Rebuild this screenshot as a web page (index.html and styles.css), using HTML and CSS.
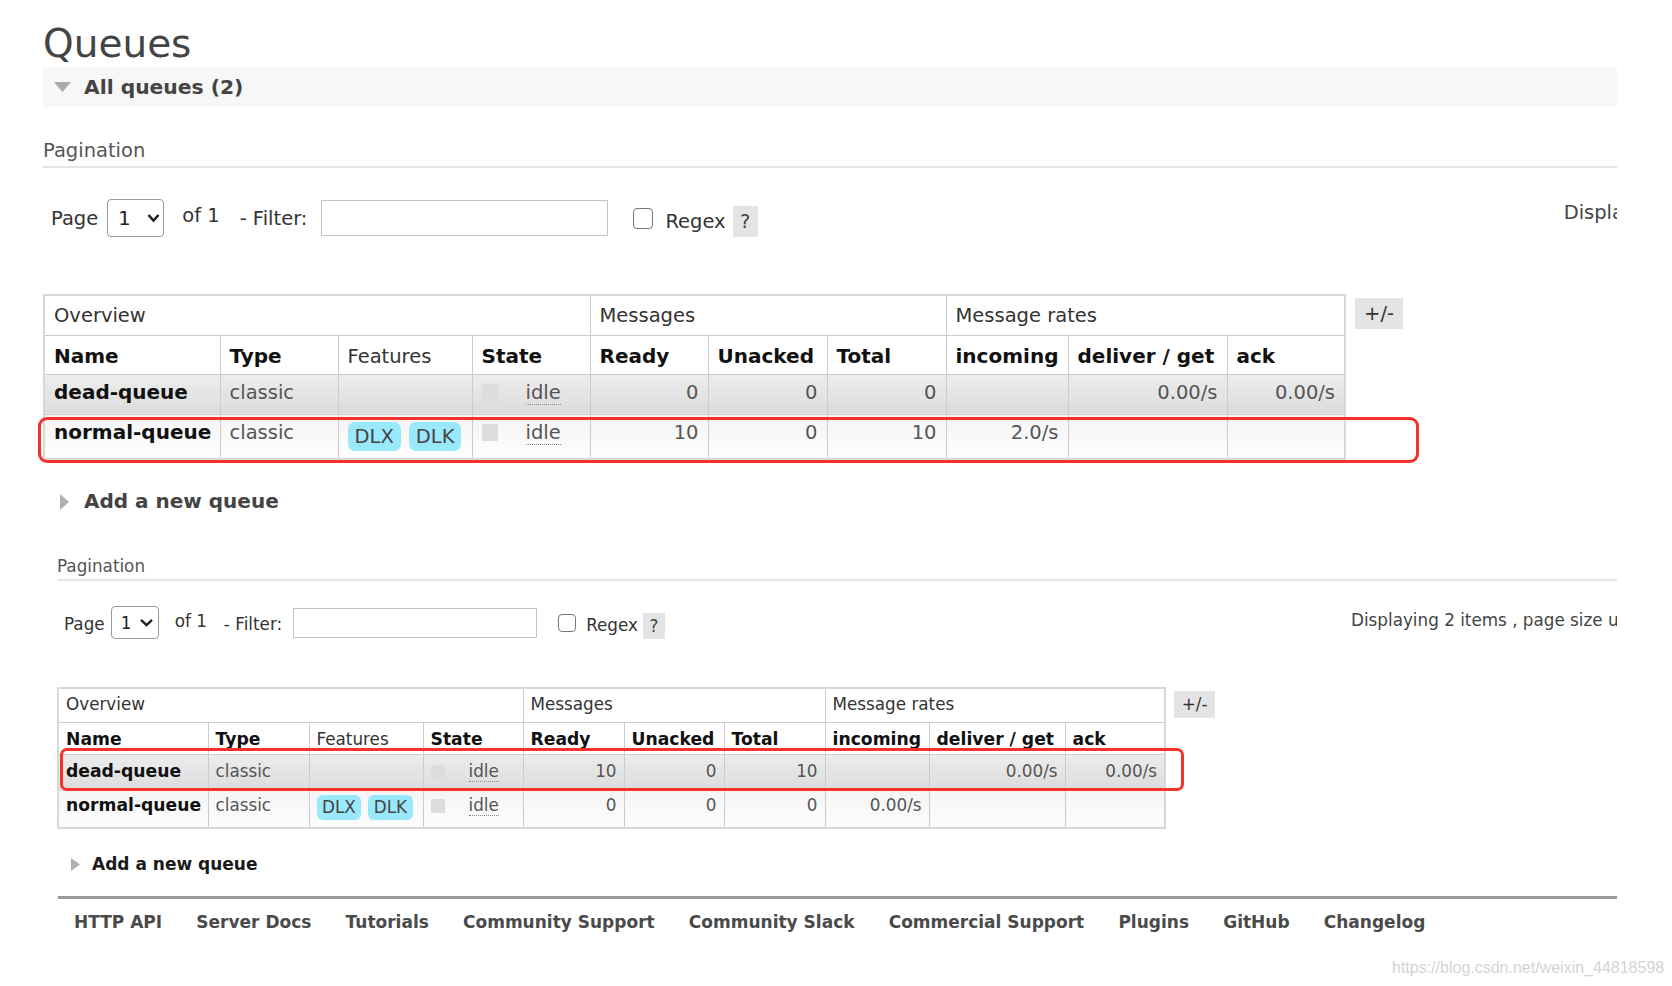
FILE: index.html
```html
<!DOCTYPE html>
<html>
<head>
<meta charset="utf-8">
<title>Queues</title>
<link rel="stylesheet" href="styles.css">
</head>
<body>
<div class="page">
  <section class="s1">
    <h1 class="title">Queues</h1>
    <div class="bar"><svg class="tri-down" viewBox="0 0 17 10"><polygon points="0,0 17,0 8.5,10" fill="#aaa"/></svg><span>All queues (2)</span></div>
    <div class="pag-head">Pagination</div>
    <div class="pag-row">
      <span class="lbl">Page</span>
      <span class="sel"><span>1</span><svg class="chev" viewBox="0 0 13 10"><polyline points="1.5,2 6.5,7.5 11.5,2" fill="none" stroke="#222" stroke-width="2.6"/></svg></span>
      <span class="of">of 1</span>
      <span class="filt">- Filter:</span>
      <span class="inp"></span>
      <span class="cb"></span>
      <span class="regex">Regex</span>
      <span class="help">?</span>
      <span class="disp">Displaying 2 items , page size up to: 100</span>
    </div>
    <div class="tablewrap">
      <table class="list t1">
        <colgroup>
          <col class="w1"><col class="w2"><col class="w3"><col class="w4"><col class="w5"><col class="w6"><col class="w7"><col class="w8"><col class="w9"><col class="w10">
        </colgroup>
        <tr class="rh1"><th colspan="4">Overview</th><th colspan="3">Messages</th><th colspan="3">Message rates</th></tr>
        <tr class="rh2"><th class="b">Name</th><th class="b">Type</th><th>Features</th><th class="b">State</th><th class="b">Ready</th><th class="b">Unacked</th><th class="b">Total</th><th class="b">incoming</th><th class="b">deliver / get</th><th class="b">ack</th></tr>
        <tr class="alt1 rb1"><td class="nm">dead-queue</td><td>classic</td><td></td><td><span class="sq"></span><span class="idle">idle</span></td><td class="n">0</td><td class="n">0</td><td class="n">0</td><td class="n"></td><td class="n">0.00/s</td><td class="n">0.00/s</td></tr>
        <tr class="alt2 rb2"><td class="nm">normal-queue</td><td>classic</td><td><span class="badge">DLX</span><span class="badge">DLK</span></td><td><span class="sq"></span><span class="idle">idle</span></td><td class="n">10</td><td class="n">0</td><td class="n">10</td><td class="n">2.0/s</td><td class="n"></td><td class="n"></td></tr>
      </table>
      <span class="pm">+/-</span>
      <div class="mark mark1"></div>
    </div>
    <div class="add"><svg class="tri-right" viewBox="0 0 9 16"><polygon points="0,0 9,8 0,16" fill="#b0b0b0"/></svg><span>Add a new queue</span></div>
  </section>

  <section class="s2">
    <div class="pag-head">Pagination</div>
    <div class="pag-row">
      <span class="lbl">Page</span>
      <span class="sel"><span>1</span><svg class="chev" viewBox="0 0 15 9"><polyline points="2,1.8 7.5,7 13,1.8" fill="none" stroke="#222" stroke-width="2.4"/></svg></span>
      <span class="of">of 1</span>
      <span class="filt">- Filter:</span>
      <span class="inp"></span>
      <span class="cb"></span>
      <span class="regex">Regex</span>
      <span class="help">?</span>
      <span class="disp">Displaying 2 items , page size up to: 100</span>
    </div>
    <div class="tablewrap">
      <table class="list t2">
        <colgroup>
          <col class="w1"><col class="w2"><col class="w3"><col class="w4"><col class="w5"><col class="w6"><col class="w7"><col class="w8"><col class="w9"><col class="w10">
        </colgroup>
        <tr class="rh1"><th colspan="4">Overview</th><th colspan="3">Messages</th><th colspan="3">Message rates</th></tr>
        <tr class="rh2"><th class="b">Name</th><th class="b">Type</th><th>Features</th><th class="b">State</th><th class="b">Ready</th><th class="b">Unacked</th><th class="b">Total</th><th class="b">incoming</th><th class="b">deliver / get</th><th class="b">ack</th></tr>
        <tr class="alt1 rb1"><td class="nm">dead-queue</td><td>classic</td><td></td><td><span class="sq"></span><span class="idle">idle</span></td><td class="n">10</td><td class="n">0</td><td class="n">10</td><td class="n"></td><td class="n">0.00/s</td><td class="n">0.00/s</td></tr>
        <tr class="alt2 rb2"><td class="nm">normal-queue</td><td>classic</td><td><span class="badge">DLX</span><span class="badge">DLK</span></td><td><span class="sq"></span><span class="idle">idle</span></td><td class="n">0</td><td class="n">0</td><td class="n">0</td><td class="n">0.00/s</td><td class="n"></td><td class="n"></td></tr>
      </table>
      <span class="pm">+/-</span>
      <div class="mark mark2"></div>
    </div>
    <div class="add"><svg class="tri-right" viewBox="0 0 9 13"><polygon points="0,0 9,6.5 0,13" fill="#b0b0b0"/></svg><span>Add a new queue</span></div>
    <div class="footer">
      <span class="fl">HTTP API</span>
      <span class="fl">Server Docs</span>
      <span class="fl">Tutorials</span>
      <span class="fl">Community Support</span>
      <span class="fl">Community Slack</span>
      <span class="fl">Commercial Support</span>
      <span class="fl">Plugins</span>
      <span class="fl">GitHub</span>
      <span class="fl">Changelog</span>
    </div>
  </section>
</div>
<div class="wm">https://blog.csdn.net/weixin_44818598</div>
</body>
</html>
```

FILE: styles.css
```css
* { box-sizing: border-box; }

body {
  margin: 0;
  width: 1672px;
  height: 986px;
  overflow: hidden;
  position: relative;
  background: #fff;
  font-family: "DejaVu Sans", Verdana, sans-serif;
  color: #444;
}

.page {
  margin-left: 43px;
  width: 1574px;
}

/* ---------- section 1 ---------- */
.s1 { font-size: 19.5px; }

.title {
  margin: 21px 0 0;
  font-size: 39px;
  line-height: 46px;
  font-weight: normal;
  color: #444;
}

.bar {
  height: 40px;
  background: #f7f7f7;
  display: flex;
  align-items: center;
  padding-left: 11px;
  font-size: 20.3px;
  font-weight: bold;
  color: #444;
}
.tri-down { width: 17px; height: 10px; margin-right: 13px; }

.pag-head {
  color: #555;
  border-bottom: 2px solid #e6e6e6;
}
.s1 .pag-head { margin-top: 32px; line-height: 23px; padding-bottom: 4px; }

.pag-row {
  display: flex;
  align-items: center;
  overflow: hidden;
  white-space: nowrap;
  color: #333;
}
.s1 .pag-row { margin-top: 31px; height: 38px; line-height: 23px; }

.sel {
  display: flex;
  align-items: center;
  justify-content: space-between;
  background: #fff;
  border: 1px solid #999;
  border-radius: 4px;
  color: #222;
}
.inp { background: #fff; border: 1px solid #c4c4c4; }
.cb { background: #fff; border: 1px solid #777; border-radius: 4px; }
.help { background: #e4e4e4; text-align: center; color: #444; }
.disp { flex: 1 1 0; min-width: 0; overflow: hidden; align-self: flex-start; color: #444; }

.s1 .lbl { margin-left: 8px; }
.s1 .sel { margin-left: 9px; width: 57px; height: 38px; padding: 0 3px 0 10px; }
.s1 .chev { width: 13px; height: 10px; }
.s1 .of { margin-left: 18px; margin-top: -5px; }
.s1 .filt { margin-left: 20px; }
.s1 .inp { margin-left: 14px; width: 287px; height: 36px; }
.s1 .cb { margin-left: 25px; width: 20px; height: 21px; }
.s1 .regex { margin-left: 12px; margin-top: 6px; }
.s1 .help { margin-left: 7px; margin-top: 7px; width: 25px; height: 31px; line-height: 31px; }
.s1 .disp { margin-left: 806px; margin-top: 2px; }

.tablewrap {
  position: relative;
  display: flex;
  align-items: flex-start;
}
.s1 .tablewrap { margin-top: 57px; }

/* ---------- tables ---------- */
.list {
  border-collapse: collapse;
  table-layout: fixed;
  border: 2px solid #d8d8d8;
}
.list th, .list td {
  border: 1px solid #cccccc;
  vertical-align: top;
  text-align: left;
  white-space: nowrap;
  overflow: hidden;
}
.list th { background: #fff; font-weight: normal; color: #333; }
.list th.b { font-weight: bold; color: #111; }
.list td { color: #555; }
.list td.nm { font-weight: bold; color: #111; }
.list td.n { text-align: right; }
.alt1 td { background: linear-gradient(#ededed, #dcdcdc); }
.alt2 td { background: linear-gradient(#f4f4f4, #fdfdfd); }

.sq { display: inline-block; background: #dddddd; vertical-align: -2px; }
.idle { border-bottom: 1px dotted #888; }
.badge {
  display: inline-block;
  background: #9ae8fc;
  color: #444;
}

.t1 { width: 1301px; font-size: 19.5px; line-height: 23px; }
.t1 th.b, .t1 td.nm { font-size: 20px; }
.t1 th, .t1 td { padding: 0 9px; }
.t1 .rh1 { height: 40px; }
.t1 .rh2 { height: 39px; }
.t1 .rb1 { height: 40px; }
.t1 .rb2 { height: 45px; }
.t1 .rh1 th { padding-top: 8px; }
.t1 .rh2 th { padding-top: 9px; }
.t1 .rb1 td, .t1 .rb2 td { padding-top: 6px; }
.t1 .w1 { width: 176px; }
.t1 .w2 { width: 118px; }
.t1 .w3 { width: 134px; }
.t1 .w4 { width: 118px; }
.t1 .w5 { width: 118px; }
.t1 .w6 { width: 119px; }
.t1 .w7 { width: 119px; }
.t1 .w8 { width: 122px; }
.t1 .w9 { width: 159px; }
.t1 .w10 { width: 118px; }
.t1 .sq { width: 16px; height: 17px; margin-right: 28px; }
.t1 .badge { padding: 3px 7px; line-height: 23px; border-radius: 7px; vertical-align: -4px; margin-right: 8px; }

.s1 .pm {
  margin-left: 9px;
  margin-top: 4px;
  width: 48px;
  height: 31px;
  line-height: 31px;
}
.pm { background: #e4e4e4; text-align: center; color: #333; }

.mark {
  position: absolute;
  border: 3px solid #f4312a;
}
.mark1 { left: -5px; top: 123px; width: 1381px; height: 46px; border-radius: 9px; }
.mark2 { left: 3px; top: 61px; width: 1124px; height: 43px; border-radius: 7px; }

.add {
  display: flex;
  align-items: center;
  font-weight: bold;
}
.s1 .add { margin-top: 30px; line-height: 23px; font-size: 20px; color: #444; }
.s1 .tri-right { width: 9px; height: 16px; margin-left: 17px; margin-right: 15px; }

/* ---------- section 2 ---------- */
.s2 { margin-left: 14px; width: 1560px; font-size: 16.8px; }
.s2 .pag-head { margin-top: 43px; line-height: 20px; padding-bottom: 3px; }
.s2 .pag-row { margin-top: 25px; height: 33px; line-height: 20px; }
.s2 .lbl { margin-left: 7px; margin-top: 3px; }
.s2 .sel { margin-left: 6px; width: 48px; height: 33px; padding: 0 4px 0 9px; }
.s2 .chev { width: 15px; height: 9px; }
.s2 .of { margin-left: 16px; margin-top: -3px; }
.s2 .filt { margin-left: 17px; margin-top: 2px; }
.s2 .inp { margin-left: 11px; width: 244px; height: 30px; }
.s2 .cb { margin-left: 21px; width: 18px; height: 18px; }
.s2 .regex { margin-left: 10px; margin-top: 5px; }
.s2 .help { margin-left: 5px; margin-top: 7px; width: 22px; height: 26px; line-height: 26px; }
.s2 .disp { margin-left: 686px; margin-top: 4px; }
.s2 .tablewrap { margin-top: 48px; }

.t2 { width: 1107px; font-size: 16.8px; line-height: 20px; }
.t2 th.b, .t2 td.nm { font-size: 17.2px; }
.t2 th, .t2 td { padding: 0 7px; }
.t2 .rh1 { height: 34px; }
.t2 .rh2 { height: 32px; }
.t2 .rb1 { height: 36px; }
.t2 .rb2 { height: 38px; }
.t2 .rh1 th { padding-top: 5px; }
.t2 .rh2 th { padding-top: 6px; }
.t2 .rb1 td { padding-top: 6px; }
.t2 .rb2 td { padding-top: 4px; }
.t2 .w1 { width: 150px; }
.t2 .w2 { width: 101px; }
.t2 .w3 { width: 114px; }
.t2 .w4 { width: 100px; }
.t2 .w5 { width: 101px; }
.t2 .w6 { width: 100px; }
.t2 .w7 { width: 101px; }
.t2 .w8 { width: 104px; }
.t2 .w9 { width: 136px; }
.t2 .w10 { width: 100px; }
.t2 .sq { width: 14px; height: 14px; margin-right: 24px; }
.t2 .badge { padding: 2.5px 5.5px; line-height: 20px; border-radius: 6px; vertical-align: -2px; margin-right: 7px; }

.s2 .pm {
  margin-left: 8px;
  margin-top: 4px;
  width: 41px;
  height: 27px;
  line-height: 27px;
}

.s2 .add { margin-top: 25px; line-height: 20px; font-size: 17px; color: #1a1a1a; }
.s2 .tri-right { width: 9px; height: 13px; margin-left: 14px; margin-right: 12px; }

.footer {
  margin-top: 22px;
  margin-left: 1px;
  border-top: 3px solid #999;
  padding: 13px 0 0 16px;
  display: flex;
  line-height: 20px;
  white-space: nowrap;
  font-size: 17px;
}
.fl { font-weight: bold; color: #4a4a4a; margin-right: 34.2px; }

.wm {
  position: absolute;
  left: 1392px;
  top: 958px;
  font-family: "Liberation Sans", Arial, sans-serif;
  font-size: 16px;
  line-height: 19px;
  color: #d4d4d4;
  white-space: nowrap;
}
```
